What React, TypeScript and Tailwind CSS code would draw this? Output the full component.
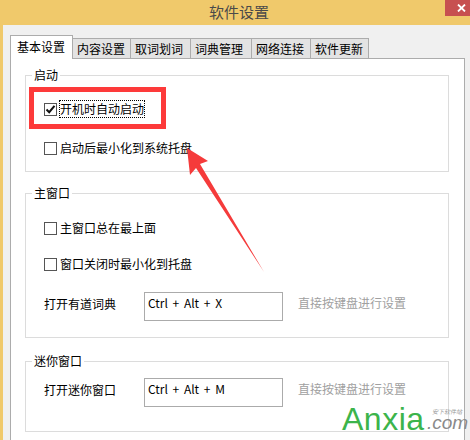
import React from "react";

const FONT = '"Noto Sans CJK SC", "Noto Sans", sans-serif';

function CheckBox({ checked }: { checked?: boolean }) {
  return (
    <div className="w-[13px] h-[13px] border border-[#555] bg-white flex items-center justify-center shrink-0">
      {checked && (
        <svg width="11" height="11" viewBox="0 0 11 11">
          <path d="M1.5 5.5 L4.2 8.2 L9.5 1.8" fill="none" stroke="#111" strokeWidth="2" />
        </svg>
      )}
    </div>
  );
}

function CheckRow({ label, checked, focus }: { label: string; checked?: boolean; focus?: boolean }) {
  return (
    <div className="h-[18px] flex items-center">
      <CheckBox checked={checked} />
      <span
        className={
          "ml-[2px] h-[18px] px-0 leading-[16px] text-[12px] text-black border " +
          (focus ? "border-dotted border-black" : "border-transparent")
        }
      >
        {label}
      </span>
    </div>
  );
}

function HotkeyRow({ label, value }: { label: string; value: string }) {
  return (
    <div className="flex items-start h-[29px]">
      <div className="w-[100px] mt-[4px] leading-[16px] text-[12px] text-black">{label}</div>
      <div className="w-[139px] h-[29px] border border-[#ababab] bg-white pl-[3px] pt-[2px] leading-[16px] text-[12px] text-black whitespace-pre [word-spacing:2px]">
        {value}
      </div>
      <div className="ml-[15px] mt-[3px] leading-[16px] text-[12px] text-[#a0a0a0]">直接按键盘进行设置</div>
    </div>
  );
}

function Group({ title, className, children }: { title: string; className: string; children: React.ReactNode }) {
  return (
    <div className={"relative w-[424px] border border-[#dcdcdc] pl-[18px] " + className}>
      <span className="absolute left-[6px] top-[-9px] bg-white px-[2px] text-[12px] leading-[16px] text-black">
        {title}
      </span>
      {children}
    </div>
  );
}

export default function App() {
  const tabs = [
    { t: "内容设置", w: 58 },
    { t: "取词划词", w: 60 },
    { t: "词典管理", w: 61 },
    { t: "网络连接", w: 59 },
    { t: "软件更新", w: 58 },
  ];
  return (
    <div className="relative w-[470px] h-[440px] overflow-hidden bg-[#f0c96b] flex flex-col" style={{ fontFamily: FONT }}>
      {/* title bar */}
      <div className="h-[25px] flex items-start shrink-0">
        <span className="ml-[209px] text-[15px] leading-[23px] text-[#4a4a4a]">软件设置</span>
        <div className="ml-auto w-[25px] h-[16px] bg-[#c75050] flex items-center pl-[12px]">
          <svg width="9" height="8" viewBox="0 0 9 8">
            <path d="M1 0.5 L8 7.5 M8 0.5 L1 7.5" stroke="#fff" strokeWidth="1.8" />
          </svg>
        </div>
      </div>
      {/* body */}
      <div className="flex-1 ml-[3px] bg-[#f0f0f0] pt-[10px] pl-[7px] pr-[5px]">
        <div className="flex items-end h-[24px] relative z-10 mb-[-1px]">
          <div className="w-[63px] h-[24px] bg-white border-t border-l border-r border-[#acacac] pl-[6px] pt-[3px] text-[12px] leading-[16px] text-black">
            基本设置
          </div>
          {tabs.map((tb) => (
            <div
              key={tb.t}
              style={{ width: tb.w }}
              className="h-[20px] mb-[1px] bg-[#e3e3e3] border-t border-r border-[#acacac] pl-[4px] pt-[2px] text-[12px] leading-[16px] text-black"
            >
              {tb.t}
            </div>
          ))}
        </div>
        <div className="w-[455px] h-[400px] border border-[#acacac] bg-white pl-[14px] pt-[16px]">
          <Group title="启动" className="h-[97px] pt-[24px]">
            <CheckRow label="开机时自动启动" checked focus />
            <div className="h-[21px]" />
            <CheckRow label="启动后最小化到系统托盘" />
          </Group>
          <Group title="主窗口" className="mt-[21px] h-[145px] pt-[25px]">
            <CheckRow label="主窗口总在最上面" />
            <div className="h-[18px]" />
            <CheckRow label="窗口关闭时最小化到托盘" />
            <div className="h-[19px]" />
            <HotkeyRow label="打开有道词典" value="Ctrl + Alt + X" />
          </Group>
          <Group title="迷你窗口" className="mt-[23px] h-[71px] pt-[16px]">
            <HotkeyRow label="打开迷你窗口" value="Ctrl + Alt + M" />
          </Group>
        </div>
      </div>

      {/* annotation: red rectangle */}
      <div className="absolute left-[29px] top-[87px] w-[137px] h-[42px] border-[5px] border-[#fd3a3a]" />
      {/* annotation: arrow */}
      <svg className="absolute left-0 top-0" width="470" height="440" viewBox="0 0 470 440">
        <polygon points="187,148 208,161 200,164 264,272 196,168 190,175" fill="#f53b3b" />
      </svg>
      {/* watermark */}
      <span
        className="absolute left-[342px] top-[401px] text-[32px] leading-[36px] text-[#3cb44b] tracking-[0.5px]"
        style={{ fontFamily: '"Liberation Sans", sans-serif' }}
      >
        Anxia
      </span>
      <span className="absolute left-[432px] top-[408px] text-[6px] leading-[8px] text-[#999] italic whitespace-nowrap">
        安下软件站
      </span>
      <span
        className="absolute left-[427px] top-[416px] text-[19px] leading-[14px] text-[#8a8a8a] italic"
        style={{ fontFamily: '"Liberation Sans", sans-serif' }}
      >
        .com
      </span>
    </div>
  );
}
